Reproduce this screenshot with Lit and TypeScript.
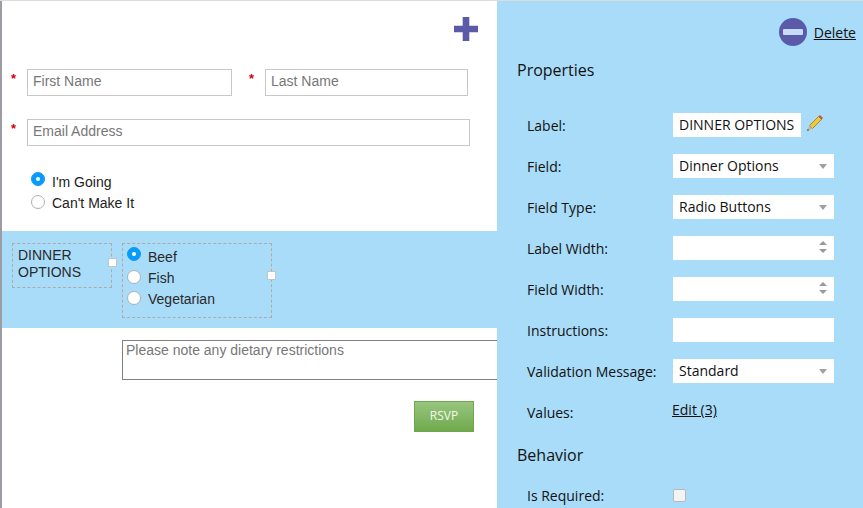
import { LitElement, html, css } from "lit";
import { customElement } from "lit/decorators.js";

@customElement("app-root")
export class AppRoot extends LitElement {
  static styles = css`
    :host { display: block; width: 863px; height: 508px; overflow: hidden; background: #fff; }
    * { box-sizing: border-box; }
    .page { display: flex; width: 863px; height: 508px; border-top: 1px solid #dcdcdc; }
    .main { width: 497px; height: 507px; flex: none; overflow: hidden; border-left: 2px solid #9c9ca2; background: #fff;
      font: 14px/17px "Liberation Sans", Arial, sans-serif; color: #222; }
    .tools { height: 68px; padding: 16px 19px 0 0; display: flex; justify-content: flex-end; align-items: flex-start; }
    .row { display: flex; align-items: flex-start; height: 27px; margin-bottom: 23px; padding-left: 9px; }
    .star { width: 16px; flex: none; padding-top: 1px; color: #d40000; font: bold 13px/17px "Liberation Sans", sans-serif; }
    .star.second { margin-left: 17px; }
    input.text, textarea { font: 14px/17px "Liberation Sans", Arial, sans-serif; background: #fff; outline: none; margin: 0; }
    input.text { height: 27px; border: 1px solid #c8c8c8; padding: 0 5px 3px; }
    input.text::placeholder, textarea::placeholder { color: #777; opacity: 1; }
    .first { width: 205px; }
    .last { width: 203px; }
    .email { width: 443px; }
    .going { padding: 3px 0 0 29px; height: 62px; }
    .opt { display: flex; align-items: center; height: 21px; gap: 7px; }
    .radio { width: 14px; height: 14px; flex: none; border-radius: 50%; background: #fff; border: 1px solid #b0b0b0; margin-top: -3px; display: flex; align-items: center; justify-content: center; }
    .opt:first-child .radio { margin-top: -7px; }
    .radio.on { background: #0a9bfa; border-color: #0a9bfa; }
    .radio.on::after { content: ""; width: 4px; height: 4px; border-radius: 50%; background: #fff; }
    .band { height: 97px; background: #a9dcf9; padding: 12px 0 0 10px; display: flex; align-items: flex-start; gap: 10px; color: #2a2a2a; }
    .box { position: relative; border: 1px dashed #b0a9a6; }
    .box.lbl { width: 100px; height: 45px; padding: 3px 0 0 5px; }
    .box.fld { width: 150px; height: 75px; padding: 3px 0 0 4px; }
    .handle { position: absolute; width: 9px; height: 9px; background: #fff; border: 1px solid #c4c4c4; }
    .lbl .handle { left: 95px; top: 14px; }
    .fld .handle { left: 144px; top: 27px; }
    textarea { display: block; width: 520px; height: 40px; margin: 12px 0 0 120px; border: 1px solid #7f7f7f; padding: 1px 3px; resize: none; border-radius: 0; }
    .btn { display: block; width: 60px; height: 31px; margin: 21px 0 0 412px; padding: 0 0 2px; border: 1px solid #6fa84c;
      background: linear-gradient(#98c57f, #70a94c); color: #f4f9ec; font: 12px/17px "Open Sans", sans-serif; }
    .side { width: 366px; height: 507px; flex: none; overflow: hidden; background: #a9dcf9; color: #111;
      font: 14px/19px "Open Sans", sans-serif; padding: 17px 7px 0 20px; }
    .del { display: flex; justify-content: flex-end; align-items: center; gap: 7px; height: 28px; }
    a { color: #111; text-decoration: underline; }
    h3 { font: 400 16px/22px "Open Sans", sans-serif; margin: 0; }
    .props { margin-top: 13px; }
    .grid { display: grid; grid-template-columns: 146px 161px; grid-auto-rows: 24px; row-gap: 17px; padding-left: 10px; margin-top: 32px; align-items: center; }
    .name { white-space: nowrap; }
    .grid.b .name { padding-top: 2px; }
    .ctl { height: 24px; background: #fff; display: flex; align-items: center; justify-content: space-between; padding: 0 6px; line-height: 20px; }
    .ctl.short { width: 128px; white-space: nowrap; }
    .labelcell { display: flex; align-items: center; gap: 5px; }
    .labelcell svg { margin-top: -4px; }
    .arrow { width: 0; height: 0; border-left: 4px solid transparent; border-right: 4px solid transparent; border-top: 5px solid #a0a0a0; margin-right: 1px; }
    .spin { display: flex; flex-direction: column; gap: 4px; margin: 0 1px 2px 0; }
    .up { width: 0; height: 0; border-left: 4px solid transparent; border-right: 4px solid transparent; border-bottom: 4px solid #999; }
    .down { width: 0; height: 0; border-left: 4px solid transparent; border-right: 4px solid transparent; border-top: 4px solid #999; }
    .edit { margin-left: -1px; margin-top: -6px; justify-self: start; }
    .behavior { margin-top: 20px; }
    .grid.b { margin-top: 16px; }
    .check { width: 13px; height: 13px; margin-top: 2px; background: #f4f4f4; border: 1px solid #b9b9b9; border-radius: 2px; }
    svg { display: block; flex: none; }
  `;

  render() {
    const opt = (label: string, on = false) => html`<div class="opt"><span class="radio ${on ? "on" : ""}"></span><span>${label}</span></div>`;
    const sel = (v: string) => html`<div class="ctl"><span>${v}</span><span class="arrow"></span></div>`;
    const spin = html`<div class="ctl"><span></span><span class="spin"><span class="up"></span><span class="down"></span></span></div>`;
    return html`<div class="page">
      <div class="main">
        <div class="tools">
          <svg width="24" height="24" viewBox="0 0 24 24"><path d="M8.7 0h6.6v8.7H24v6.6h-8.7V24H8.7v-8.7H0V8.7h8.7z" fill="#5a5aa8"/></svg>
        </div>
        <div class="row">
          <span class="star">*</span><input class="text first" placeholder="First Name" />
          <span class="star second">*</span><input class="text last" placeholder="Last Name" />
        </div>
        <div class="row"><span class="star">*</span><input class="text email" placeholder="Email Address" /></div>
        <div class="going">${opt("I'm Going", true)}${opt("Can't Make It")}</div>
        <div class="band">
          <div class="box lbl">DINNER<br />OPTIONS<span class="handle"></span></div>
          <div class="box fld">${opt("Beef", true)}${opt("Fish")}${opt("Vegetarian")}<span class="handle"></span></div>
        </div>
        <textarea placeholder="Please note any dietary restrictions"></textarea>
        <button class="btn">RSVP</button>
      </div>
      <div class="side">
        <div class="del">
          <svg width="28" height="28" viewBox="0 0 28 28"><circle cx="14" cy="14" r="14" fill="#5a5aa8"/><rect x="4" y="11" width="20" height="6" rx="1" fill="#c6dcf6"/></svg>
          <a href="#">Delete</a>
        </div>
        <h3 class="props">Properties</h3>
        <div class="grid">
          <span class="name">Label:</span>
          <div class="labelcell"><div class="ctl short">DINNER OPTIONS</div>
            <svg width="18" height="18" viewBox="0 0 18 18">
              <path d="M3.5 11.5 12.5 2.5 15.5 5.5 6.5 14.5 Z" fill="#f0c93a" stroke="#8a6d14" stroke-width=".7"/>
              <path d="M12.5 2.5 14 1 17 4 15.5 5.5 Z" fill="#c9524a"/>
              <path d="M3.5 11.5 6.5 14.5 1.5 16.5 Z" fill="#c8b48c"/>
              <path d="M1 17 1.8 14.8 3.2 16.2 Z" fill="#444"/>
            </svg>
          </div>
          <span class="name">Field:</span>${sel("Dinner Options")}
          <span class="name">Field Type:</span>${sel("Radio Buttons")}
          <span class="name">Label Width:</span>${spin}
          <span class="name">Field Width:</span>${spin}
          <span class="name">Instructions:</span><div class="ctl"></div>
          <span class="name">Validation Message:</span>${sel("Standard")}
          <span class="name">Values:</span><a class="edit" href="#">Edit (3)</a>
        </div>
        <h3 class="behavior">Behavior</h3>
        <div class="grid b"><span class="name">Is Required:</span><span class="check"></span></div>
      </div>
    </div>`;
  }
}
